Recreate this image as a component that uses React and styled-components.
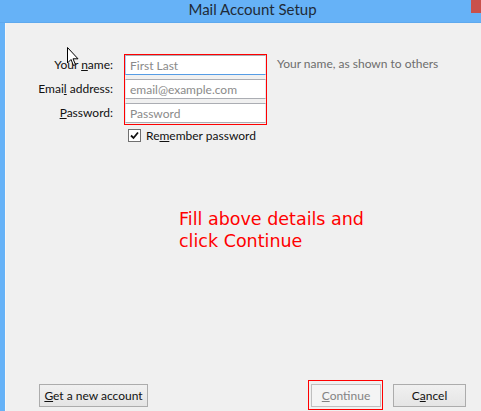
import styled, { createGlobalStyle } from "styled-components";

const GlobalStyle = createGlobalStyle`
  html, body {
    margin: 0;
    padding: 0;
    overflow: hidden;
  }
  body {
    font-family: Lato, "Noto Sans", sans-serif;
  }
`;

const Window = styled.div`
  position: relative;
  display: flex;
  flex-direction: column;
  width: 481px;
  height: 411px;
  background: #66b2f7;
`;

const TitleBar = styled.div`
  display: flex;
  align-items: flex-start;
  height: 22px;
  border-bottom: 1px solid #5ea9ee;
`;

const Title = styled.div`
  flex: 1;
  padding-left: 34px;
  text-align: center;
  font-size: 15px;
  line-height: 19px;
  color: #1f2b38;
`;

const CloseButton = styled.div`
  width: 10px;
  height: 13px;
  background: #c9514b;
`;

const Body = styled.div`
  flex: 1;
  display: flex;
  flex-direction: column;
  margin-left: 5px;
  background: #f0f0f0;
  border-left: 1px solid #f7f7f7;
`;

const Form = styled.div`
  display: flex;
  align-items: flex-start;
  margin-top: 31px;
`;

const Labels = styled.div`
  display: flex;
  flex-direction: column;
  gap: 4px;
  width: 107px;
  padding-top: 1px;
  margin-right: 11px;
`;

const Label = styled.div`
  height: 20px;
  line-height: 20px;
  text-align: right;
  font-size: 12px;
  color: #111;
`;

const RedFrame = styled.div`
  display: flex;
  flex-direction: ${(p) => (p.$column ? "column" : "row")};
  gap: ${(p) => (p.$column ? "4px" : "0")};
  border: 1px solid #ff0000;
  padding: ${(p) => p.$pad || "0"};
`;

const Input = styled.input`
  box-sizing: border-box;
  width: 141px;
  height: 20px;
  margin: 0;
  padding: 0 0 0 4px;
  background: #fff;
  border: 1px solid;
  border-color: #abadb3 #e3e9ef #abadb3 #e3e9ef;
  border-bottom-color: ${(p) => (p.$focused ? "#569de5" : "#abadb3")};
  border-left-color: ${(p) => (p.$focused ? "#a9cdf2" : "#e3e9ef")};
  font-family: Lato, "Noto Sans", sans-serif;
  font-size: 12px;
  outline: none;

  &::placeholder {
    color: #8a8a8a;
  }
`;

const Hint = styled.div`
  margin-left: 10px;
  line-height: 20px;
  font-size: 12px;
  color: #6d6d6d;
`;

const CheckRow = styled.label`
  display: flex;
  align-items: center;
  gap: 5px;
  margin-top: 3px;
  padding-left: 122px;
  font-size: 12px;
  color: #111;
`;

const CheckBox = styled.span`
  box-sizing: border-box;
  display: flex;
  align-items: center;
  justify-content: center;
  width: 13px;
  height: 13px;
  background: #fff;
  border: 1px solid #707070;
`;

const Note = styled.div`
  margin-top: 66px;
  padding-left: 173px;
  font-family: "DejaVu Sans", Verdana, sans-serif;
  font-size: 17.5px;
  line-height: 21.5px;
  color: #ff0000;
`;

const Footer = styled.div`
  display: flex;
  align-items: flex-end;
  margin-top: auto;
  padding: 0 15px 4px 33px;
`;

const Button = styled.button`
  box-sizing: border-box;
  width: ${(p) => p.$width}px;
  height: 23px;
  margin: 0;
  padding: 0;
  border: 1px solid ${(p) => (p.disabled ? "#bfbfbf" : "#acacac")};
  background: ${(p) =>
    p.disabled ? "#f4f4f4" : "linear-gradient(#f0f0f0, #e5e5e5)"};
  font-family: Lato, "Noto Sans", sans-serif;
  font-size: 12px;
  color: ${(p) => (p.disabled ? "#838383" : "#111")};
`;

const Spacer = styled.div`
  flex: 1;
`;

const ContinueFrame = styled(RedFrame)`
  margin-bottom: -3px;
  margin-right: 10px;
`;

const Cursor = styled.svg`
  position: absolute;
  left: 67px;
  top: 47px;
`;

export default function App() {
  return (
    <Window>
      <GlobalStyle />
      <TitleBar>
        <Title>Mail Account Setup</Title>
        <CloseButton />
      </TitleBar>
      <Body>
        <Form>
          <Labels>
            <Label>
              Your <u>n</u>ame:
            </Label>
            <Label>
              Emai<u>l</u> address:
            </Label>
            <Label>
              <u>P</u>assword:
            </Label>
          </Labels>
          <RedFrame $column $pad="0 0 1px 0">
            <Input $focused placeholder="First Last" />
            <Input placeholder="email@example.com" />
            <Input type="password" placeholder="Password" />
          </RedFrame>
          <Hint>Your name, as shown to others</Hint>
        </Form>
        <CheckRow>
          <CheckBox>
            <svg width="9" height="9" viewBox="0 0 9 9">
              <path d="M1 4.5 L3.5 7 L8 1.5" fill="none" stroke="#111" strokeWidth="1.8" />
            </svg>
          </CheckBox>
          <span>
            Re<u>m</u>ember password
          </span>
        </CheckRow>
        <Note>
          Fill above details and
          <br />
          click Continue
        </Note>
        <Footer>
          <Button $width={109}>
            <u>G</u>et a new account
          </Button>
          <Spacer />
          <ContinueFrame $pad="3px 1px 2px 2px">
            <Button $width={70} disabled>
              <u>C</u>ontinue
            </Button>
          </ContinueFrame>
          <Button $width={73}>
            C<u>a</u>ncel
          </Button>
        </Footer>
      </Body>
      <Cursor width="13" height="20" viewBox="0 0 13 20">
        <path
          d="M0.5 0.5 V16 L4 12.5 L6.5 18.5 L8.5 17.6 L6 11.8 H11 Z"
          fill="#fff"
          stroke="#000"
          strokeWidth="1"
          strokeLinejoin="round"
        />
      </Cursor>
    </Window>
  );
}
